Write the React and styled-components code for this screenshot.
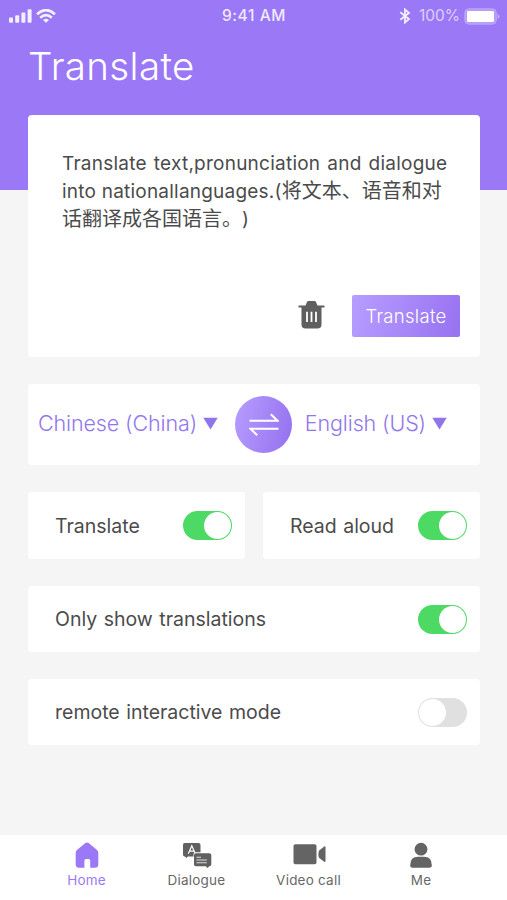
import React, { useState } from "react";
import styled, { createGlobalStyle } from "styled-components";

const GlobalStyle = createGlobalStyle`
  * { box-sizing: border-box; }
  body { margin: 0; background: #f5f5f5; }
  button { border: 0; padding: 0; margin: 0; background: none; font: inherit; color: inherit; cursor: pointer; }
`;

const Screen = styled.div`
  width: 507px;
  height: 900px;
  overflow: hidden;
  display: flex;
  flex-direction: column;
  background: linear-gradient(#9b78f5 0 190px, #f5f5f5 190px);
  font-family: Inter, "Noto Sans CJK SC", sans-serif;
  color: #4b4b4b;
`;

const StatusBar = styled.div`
  height: 32px;
  padding: 0 7px 0 8px;
  display: grid;
  grid-template-columns: 1fr auto 1fr;
  align-items: center;
  color: #f0eafe;
  font-size: 15.5px;
  line-height: 20px;
`;

const StatusGroup = styled.div`
  display: flex;
  align-items: center;
  gap: ${(p) => p.$gap || 0}px;
  justify-content: ${(p) => (p.$end ? "flex-end" : "flex-start")};
`;

const Clock = styled.span`
  font-weight: 500;
  font-size: 15.5px;
  letter-spacing: 0.6px;
`;

const Percent = styled.span`
  font-weight: 400;
  color: #ddd0fc;
  margin: 0 4px 0 8px;
`;

const Title = styled.h1`
  margin: 0;
  height: 83px;
  padding: 10px 0 0 28px;
  font-size: 38.5px;
  line-height: 48px;
  font-weight: 300;
  letter-spacing: 0.35px;
  color: #fff;
`;

const Content = styled.main`
  flex: 1;
  padding: 0 27px 0 28px;
  display: flex;
  flex-direction: column;
  gap: 27px;
`;

const Card = styled.section`
  background: #fff;
  border-radius: 4px;
  display: flex;
`;

const InputCard = styled(Card)`
  height: 242px;
  padding: 35px 20px 20px 34px;
  flex-direction: column;
  justify-content: space-between;
`;

const Source = styled.p`
  margin: 0;
  font-size: 19px;
  line-height: 28px;
  white-space: nowrap;
  text-spacing-trim: space-all;
`;

const Line = styled.span`
  display: block;
  height: 28px;
  letter-spacing: ${(p) => p.$track}px;
  word-spacing: ${(p) => p.$word || 0}px;
`;

const Han = styled.span`
  font-size: 20px;
  line-height: 0;
  letter-spacing: 0;
`;

const Actions = styled.div`
  display: flex;
  justify-content: flex-end;
  align-items: center;
  gap: 27px;
`;

const PrimaryButton = styled.button`
  width: 108px;
  height: 42px;
  border-radius: 2px;
  background: linear-gradient(105deg, #b79dff, #9772f1);
  color: #fff;
  font-size: 18.5px;
  font-weight: 300;
  letter-spacing: 0.3px;
`;

const LanguageCard = styled(Card)`
  height: 81px;
  padding: 0 33px 0 10px;
  align-items: center;
  justify-content: space-between;
`;

const LanguagePicker = styled.button`
  display: flex;
  align-items: center;
  gap: 6px;
  color: #9277ec;
  font-size: 21.5px;
  font-weight: 300;
  line-height: 28px;
  letter-spacing: -0.12px;
  padding-bottom: 4px;
  white-space: nowrap;
`;

const SwapButton = styled.button`
  width: 57px;
  height: 57px;
  margin: 0 0 0 5px;
  border-radius: 50%;
  display: grid;
  place-items: center;
  background: linear-gradient(105deg, #b79dff, #9470ee);
`;

const SwitchPair = styled.div`
  display: grid;
  grid-template-columns: 1fr 1fr;
  gap: 18px;
`;

const SwitchCard = styled(Card)`
  height: ${(p) => p.$height || 66}px;
  padding: 0 13px 0 27px;
  align-items: center;
  justify-content: space-between;
`;

const SwitchLabel = styled.span`
  font-size: 19.5px;
  line-height: 28px;
  word-spacing: 1px;
  white-space: nowrap;
`;

const Track = styled.button`
  width: 49px;
  height: 29px;
  padding: 1px;
  border-radius: 15px;
  display: flex;
  justify-content: ${(p) => (p.$on ? "flex-end" : "flex-start")};
  background: ${(p) => (p.$on ? "#4cd964" : "#e0e0e0")};
`;

const Knob = styled.span`
  width: 27px;
  height: 27px;
  border-radius: 50%;
  background: #fff;
`;

const TabBar = styled.nav`
  height: 65px;
  padding: 7px 31px 0;
  display: grid;
  grid-template-columns: 111px 109px 115px 110px;
  background: #fff;
`;

const Tab = styled.button`
  display: flex;
  flex-direction: column;
  align-items: center;
  gap: 2px;
  height: 54px;
  color: ${(p) => (p.$active ? "#9b78f5" : "#686868")};
  font-size: 13.5px;
  line-height: 18px;
  letter-spacing: 0.22px;
`;

const SignalIcon = () => (
  <svg width="24" height="14" viewBox="0 0 24 14" fill="#f4effe">
    <rect x="1" y="8.5" width="4" height="5.2" rx="1" />
    <rect x="7.2" y="6.2" width="4" height="7.5" rx="1" />
    <rect x="13.4" y="3.5" width="4" height="10.2" rx="1" />
    <rect x="19.6" y="0.3" width="4" height="13.4" rx="1" />
  </svg>
);

const WifiIcon = () => (
  <svg width="20" height="14" viewBox="0 0 20 14" fill="none" stroke="#f4effe" strokeWidth="2.7">
    <path d="M1 5.2Q10-3 19 5.2" />
    <path d="M4.2 8.8Q10 3.4 15.8 8.8" />
    <path d="M7 11L10 13.8 13 11Q10 8.7 7 11Z" fill="#f4effe" stroke="none" />
  </svg>
);

const BluetoothIcon = () => (
  <svg width="12" height="16" viewBox="0 0 12 16" fill="none" stroke="#f4effe" strokeWidth="1.8">
    <path d="M1.3 4.2L10 11 6 14.5V1.5L10 5 1.3 11.8" />
  </svg>
);

const BatteryIcon = () => (
  <svg width="36" height="17" viewBox="0 0 36 17">
    <rect x="0.8" y="0.8" width="31.5" height="15.4" rx="4" fill="#b69cfa" stroke="#bea7fb" strokeWidth="1" />
    <rect x="3" y="3" width="27" height="11" rx="1.2" fill="#fff" />
    <path d="M33.6 6Q35.5 6.7 35.5 8.5T33.6 11Z" fill="#c5b1fb" />
  </svg>
);

const TrashIcon = () => (
  <svg width="27" height="29" viewBox="0 0 27 29">
    <path
      d="M0.5 5.5H7.5L9 2Q9.4 1 10.5 1H16.5Q17.6 1 18 2L19.5 5.5H26.5V7.5H23.5V24.5Q23.5 28.5 19.5 28.5H7.5Q3.5 28.5 3.5 24.5V7.5H0.5Z"
      fill="#5f5f5f"
    />
    <path d="M9 11.8V22M13.5 11.8V22M18 11.8V22" stroke="#fff" strokeWidth="1.8" />
  </svg>
);

const CaretSvg = styled.svg`
  margin-top: 2px;
`;

const CaretIcon = () => (
  <CaretSvg width="15" height="13" viewBox="0 0 15 13">
    <path d="M0.3 0.8H14.7L7.5 12.6Z" fill="#8f74ea" />
  </CaretSvg>
);

const SwapIcon = () => (
  <svg width="30" height="24" viewBox="0 0 30 24" fill="none" stroke="#fff" strokeWidth="2">
    <path d="M0.5 7.8H28.5L21.8 1.2" />
    <path d="M29.5 15.7H1.5L8.2 22.3" />
  </svg>
);

const HomeIcon = () => (
  <svg width="24" height="27" viewBox="0 0 24 27">
    <path
      d="M10 1.2Q12-0.3 14 1.2L22 8Q23.3 9.2 23.3 10.7V22.2Q23.3 25.7 20 25.7H15.2V18.4Q15.2 16.9 13.6 16.9H11Q9.4 16.9 9.4 18.4V25.7H4Q0.7 25.7 0.7 22.2V10.7Q0.7 9.2 2 8Z"
      fill="#9b78f5"
    />
  </svg>
);

const DialogueIcon = () => (
  <svg width="30" height="27" viewBox="0 0 30 27">
    <path d="M2.5 1H16.5Q18.5 1 18.5 3V10.2H13.5Q11.5 10.2 11.5 12.2V14.5H6L4.3 16 3 14.5H2.5Q1 14.5 1 12.5V3Q1 1 2.5 1Z" fill="#606060" />
    <path d="M6.3 11.7L9.8 3.8 13.3 11.7M7.6 9.2H12" fill="none" stroke="#fff" strokeWidth="1.2" />
    <path d="M13.8 11.2H27.3Q29.3 11.2 29.3 13.2V22.5Q29.3 24.3 27.3 24.3L25.5 26 23.8 24.3H13.8Q12 24.3 12 22.5V13.2Q12 11.2 13.8 11.2Z" fill="#606060" />
    <path d="M14.5 15.2H19M14.5 18H24.8M14.5 20.8H24.8" stroke="#ddd" strokeWidth="1.1" />
  </svg>
);

const VideoIcon = () => (
  <svg width="34" height="27" viewBox="0 0 34 27" fill="#646464">
    <rect x="1.5" y="2.2" width="23" height="20" rx="1.8" />
    <path d="M27.2 8.6L32.2 4.5Q33.5 4 33.5 5.3V19Q33.5 20.3 32.2 19.8L27.2 16Q26.4 15 26.4 12.3T27.2 8.6Z" />
  </svg>
);

const PersonIcon = () => (
  <svg width="24" height="27" viewBox="0 0 24 27" fill="#646464">
    <circle cx="12" cy="7.2" r="6.4" />
    <path d="M1.2 23.2Q1.2 14.8 9 14.8H15Q22.8 14.8 22.8 23.2Q22.8 25.7 20.3 25.7H3.7Q1.2 25.7 1.2 23.2Z" />
  </svg>
);

function Switch({ label, height, initial }) {
  const [on, setOn] = useState(initial);
  return (
    <SwitchCard $height={height}>
      <SwitchLabel>{label}</SwitchLabel>
      <Track role="switch" aria-checked={on} aria-label={label} $on={on} onClick={() => setOn(!on)}>
        <Knob />
      </Track>
    </SwitchCard>
  );
}

export default function App() {
  return (
    <>
      <GlobalStyle />
      <Screen>
        <StatusBar>
          <StatusGroup $gap={4}>
            <SignalIcon />
            <WifiIcon />
          </StatusGroup>
          <Clock>9:41 AM</Clock>
          <StatusGroup $end>
            <BluetoothIcon />
            <Percent>100%</Percent>
            <BatteryIcon />
          </StatusGroup>
        </StatusBar>
        <Title>Translate</Title>
        <Content>
          <InputCard>
            <Source>
              <Line $track={0.24} $word={1.4}>Translate text,pronunciation and dialogue</Line>
              <Line $track={0.22}>into nationallanguages.(<Han>将文本、语音和对</Han></Line>
              <Line $track={0}><Han>话翻译成各国语言。</Han>)</Line>
            </Source>
            <Actions>
              <button aria-label="Delete"><TrashIcon /></button>
              <PrimaryButton>Translate</PrimaryButton>
            </Actions>
          </InputCard>
          <LanguageCard>
            <LanguagePicker>Chinese (China)<CaretIcon /></LanguagePicker>
            <SwapButton aria-label="Swap languages"><SwapIcon /></SwapButton>
            <LanguagePicker>English (US)<CaretIcon /></LanguagePicker>
          </LanguageCard>
          <SwitchPair>
            <Switch label="Translate" height={67} initial />
            <Switch label="Read aloud" height={67} initial />
          </SwitchPair>
          <Switch label="Only show translations" initial />
          <Switch label="remote interactive mode" initial={false} />
        </Content>
        <TabBar>
          <Tab $active><HomeIcon />Home</Tab>
          <Tab><DialogueIcon />Dialogue</Tab>
          <Tab><VideoIcon />Video call</Tab>
          <Tab><PersonIcon />Me</Tab>
        </TabBar>
      </Screen>
    </>
  );
}
